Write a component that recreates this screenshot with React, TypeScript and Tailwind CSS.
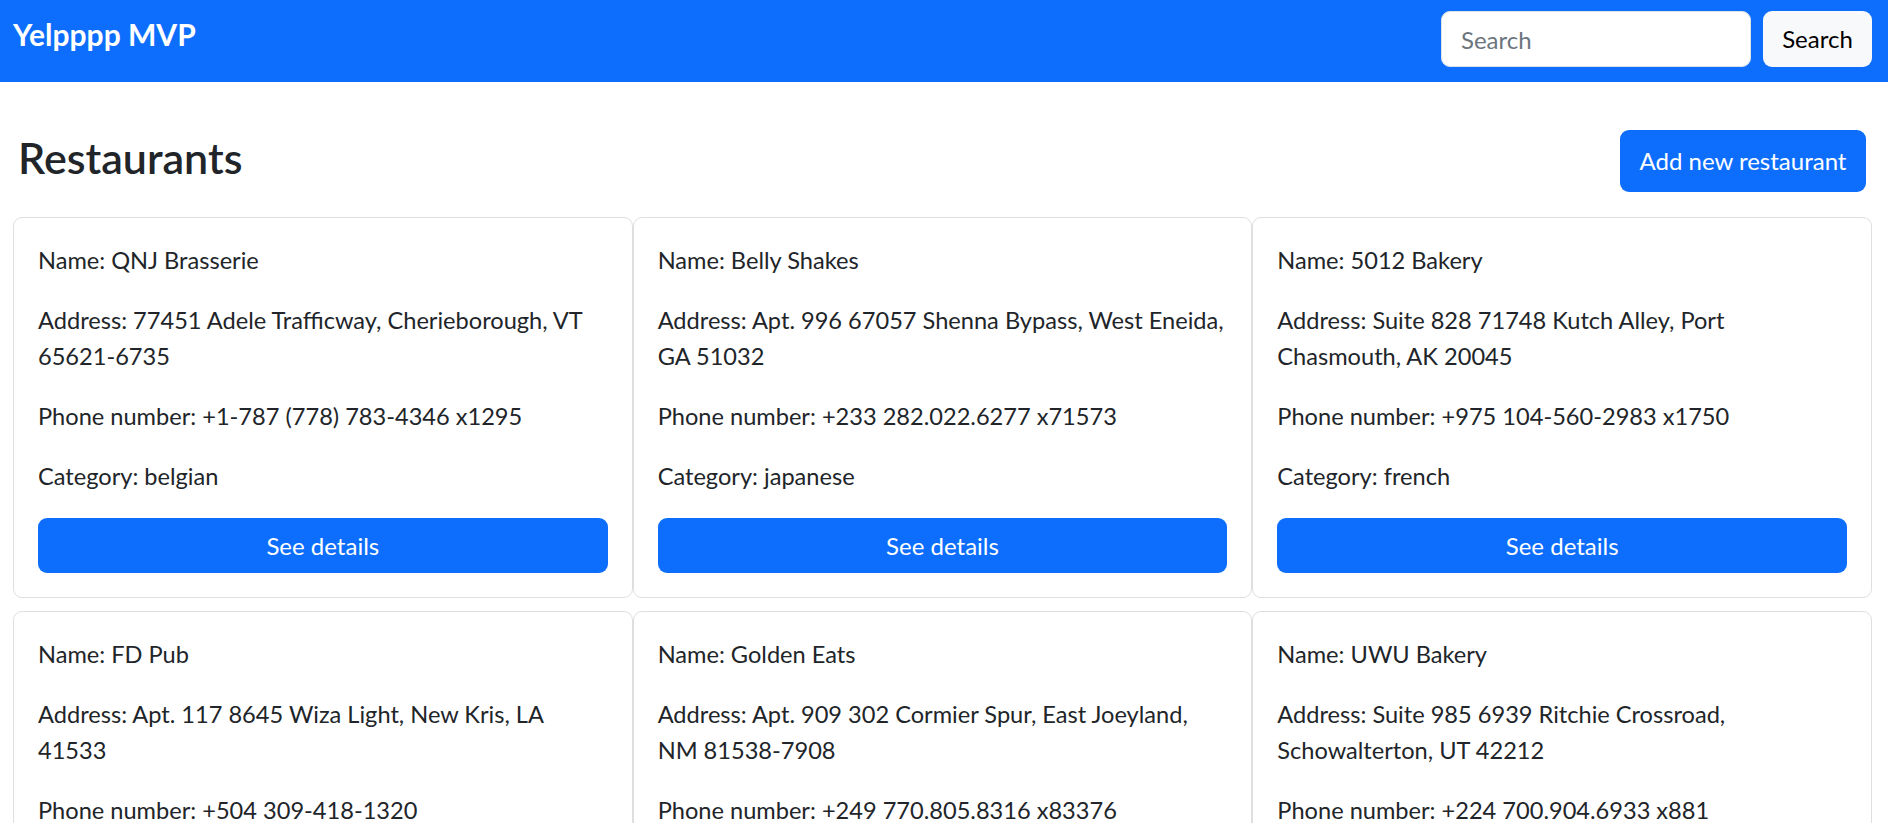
import React from "react";

const restaurants = [
  {
    name: "QNJ Brasserie",
    address: "77451 Adele Trafficway, Cherieborough, VT 65621-6735",
    phone: "+1-787 (778) 783-4346 x1295",
    category: "belgian",
  },
  {
    name: "Belly Shakes",
    address: "Apt. 996 67057 Shenna Bypass, West Eneida, GA 51032",
    phone: "+233 282.022.6277 x71573",
    category: "japanese",
  },
  {
    name: "5012 Bakery",
    address: "Suite 828 71748 Kutch Alley, Port Chasmouth, AK 20045",
    phone: "+975 104-560-2983 x1750",
    category: "french",
  },
  {
    name: "FD Pub",
    address: "Apt. 117 8645 Wiza Light, New Kris, LA 41533",
    phone: "+504 309-418-1320",
    category: "irish",
  },
  {
    name: "Golden Eats",
    address: "Apt. 909 302 Cormier Spur, East Joeyland, NM 81538-7908",
    phone: "+249 770.805.8316 x83376",
    category: "chinese",
  },
  {
    name: "UWU Bakery",
    address: "Suite 985 6939 Ritchie Crossroad, Schowalterton, UT 42212",
    phone: "+224 700.904.6933 x881",
    category: "french",
  },
];

const App = () => {
  return (
    <div className="min-h-screen bg-white text-[#212529] font-['Lato',sans-serif] text-[23.6px] leading-[36px]">
      {/* navbar */}
      <nav className="h-[82px] bg-[#0d6efd] flex items-start justify-between pt-[11px] pl-[13px] pr-[16px]">
        <a className="text-white text-[30px] leading-[45px] font-bold pt-[1px]">
          Yelpppp MVP
        </a>
        <form className="flex gap-x-[12px]">
          <input
            type="text"
            placeholder="Search"
            className="w-[310px] h-[56px] bg-white rounded-[9px] border-[1.5px] border-[#dee2e6] px-[19px] text-[24px] placeholder:text-[#6c757d] outline-none"
          />
          <button
            type="button"
            className="w-[109px] h-[56px] bg-[#f8f9fa] rounded-[9px] text-black text-[24px]"
          >
            Search
          </button>
        </form>
      </nav>

      {/* heading */}
      <div className="flex items-center justify-between pt-[48px] pb-[25px] pl-[18px] pr-[22px]">
        <h3 className="text-[43px] leading-[50px] font-semibold pb-[6px]">Restaurants</h3>
        <button className="h-[62px] w-[246px] bg-[#0d6efd] text-white rounded-[9px] text-[24px]">
          Add new restaurant
        </button>
      </div>

      {/* cards */}
      <div className="grid grid-cols-3 gap-y-[13px] pl-[13px] pr-[16px]">
        {restaurants.map((item) => (
          <div
            key={item.name}
            className="border-[1.5px] border-[#dfdfdf] rounded-[9px] p-[24px]"
          >
            <p className="mb-[24px]">Name: {item.name}</p>
            <p className="mb-[24px]">Address: {item.address}</p>
            <p className="mb-[24px]">Phone number: {item.phone}</p>
            <p className="mb-[24px]">Category: {item.category}</p>
            <button className="w-full h-[55px] bg-[#0d6efd] text-white rounded-[9px] text-[24px]">
              See details
            </button>
          </div>
        ))}
      </div>
    </div>
  );
};

export default App;
